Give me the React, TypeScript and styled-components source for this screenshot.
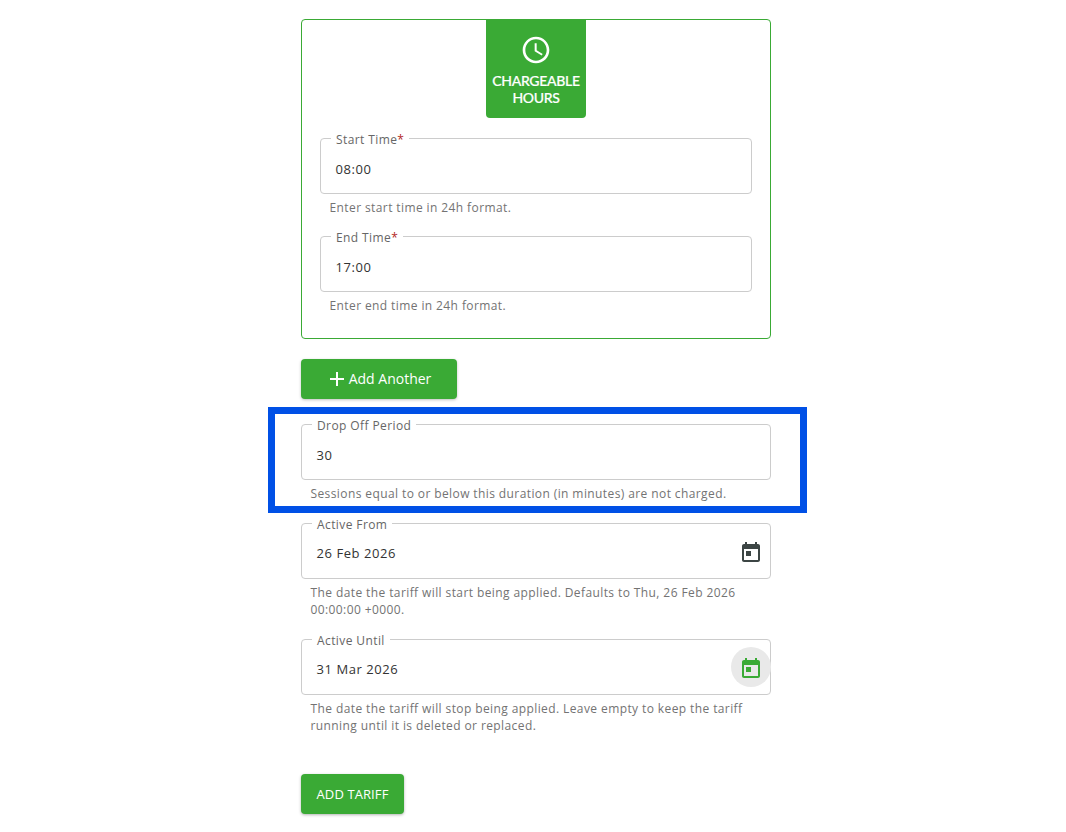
import React from "react";
import styled, { createGlobalStyle } from "styled-components";

const GREEN = "#3aaa35";

const Global = createGlobalStyle`
	html, body {
		margin: 0;
		padding: 0;
		background: #fff;
		font-family: "Open Sans", "Liberation Sans", sans-serif;
		overflow: hidden;
	}
`;

const Page = styled.div`
	position: relative;
	width: 1066px;
	height: 832px;
	box-sizing: border-box;
	padding: 19px 0 0 301px;
	overflow: hidden;
`;

const Column = styled.div`
	width: 470px;
	display: flex;
	flex-direction: column;
`;

const Card = styled.section`
	box-sizing: border-box;
	height: 320px;
	border: 1px solid ${GREEN};
	border-radius: 4px;
	padding: 0 18px;
	display: flex;
	flex-direction: column;
`;

const Badge = styled.div`
	align-self: center;
	box-sizing: border-box;
	width: 100px;
	height: 98px;
	padding-top: 14px;
	margin-bottom: 20px;
	background: ${GREEN};
	border-radius: 0 0 4px 4px;
	color: #fff;
	display: flex;
	flex-direction: column;
	align-items: center;
	gap: 6px;
`;

const BadgeText = styled.div`
	font-family: "Lato", "Open Sans", sans-serif;
	font-size: 14px;
	font-weight: 500;
	line-height: 17px;
	letter-spacing: -0.3px;
	text-align: center;
	text-transform: uppercase;
	-webkit-text-stroke: 0.2px #fff;
`;

const FieldWrap = styled.div<{ $gap: number }>`
	margin-bottom: ${(p) => p.$gap}px;
`;

const Outline = styled.div`
	position: relative;
	box-sizing: border-box;
	height: 56px;
	border: 1px solid #ccc;
	border-radius: 4px;
	padding-left: 14.5px;
	display: flex;
	align-items: center;
	justify-content: space-between;
`;

const Label = styled.label`
	position: absolute;
	top: -8px;
	left: 10px;
	padding: 0 5px;
	background: #fff;
	font-size: 12px;
	line-height: 17px;
	letter-spacing: 0.4px;
	color: #666;
`;

const Required = styled.span`
	color: #b3261e;
`;

const Value = styled.div<{ $adorned: boolean }>`
	margin-top: ${(p) => (p.$adorned ? 4.5 : 6)}px;
	font-size: 13px;
	line-height: 18px;
	letter-spacing: 0.55px;
	color: #333;
`;

const Helper = styled.div`
	margin-top: 5px;
	padding-left: 9.5px;
	font-size: 12px;
	line-height: 17px;
	letter-spacing: 0.4px;
	color: #737373;
`;

const CalendarButton = styled.div<{ $active?: boolean }>`
	width: 40px;
	height: 40px;
	margin-right: -1px;
	border-radius: 50%;
	display: flex;
	align-items: center;
	justify-content: center;
	background: ${(p) => (p.$active ? "#e9e9e9" : "transparent")};
	color: ${(p) => (p.$active ? GREEN : "#3c4544")};

	svg {
		margin-top: 4px;
	}
`;

const AddAnother = styled.button`
	box-sizing: border-box;
	width: 156px;
	height: 40px;
	margin: 20px 0 25px;
	border: 0;
	border-radius: 4px;
	background: ${GREEN};
	color: #fff;
	font-family: inherit;
	font-size: 14px;
	font-weight: 500;
	display: flex;
	align-items: center;
	justify-content: center;
	padding: 0 2px 2px 0;
	box-shadow: 0 1px 3px rgba(0, 0, 0, 0.25);

	svg {
		margin-top: 2px;
	}
`;

const Submit = styled.button`
	align-self: flex-start;
	box-sizing: border-box;
	width: 103px;
	height: 40px;
	margin-top: 20px;
	border: 0;
	border-radius: 4px;
	padding: 0;
	background: ${GREEN};
	color: #fff;
	font-family: inherit;
	font-size: 13px;
	font-weight: 500;
	letter-spacing: 0.1px;
	text-transform: uppercase;
	box-shadow: 0 1px 3px rgba(0, 0, 0, 0.3);
`;

const Highlight = styled.div`
	position: absolute;
	left: 268px;
	top: 407px;
	width: 539px;
	height: 106px;
	box-sizing: border-box;
	border: 7px solid #0050e6;
	pointer-events: none;
`;

const ClockIcon = () => (
	<svg width="32" height="32" viewBox="0 0 24 24" fill="currentColor">
		<path d="M11.99 2C6.47 2 2 6.48 2 12s4.47 10 9.99 10C17.52 22 22 17.52 22 12S17.52 2 11.99 2zM12 20c-4.42 0-8-3.58-8-8s3.58-8 8-8 8 3.58 8 8-3.58 8-8 8zm.5-13H11v6l5.25 3.15.75-1.23-4.5-2.67V7z" />
	</svg>
);

const PlusIcon = () => (
	<svg width="24" height="24" viewBox="0 0 24 24" fill="currentColor">
		<path d="M19 13h-6v6h-2v-6H5v-2h6V5h2v6h6v2z" />
	</svg>
);

const TodayIcon = () => (
	<svg width="24" height="24" viewBox="0 0 24 24" fill="currentColor">
		<path d="M19 3h-1V1h-2v2H8V1H6v2H5c-1.11 0-1.99.9-1.99 2L3 19c0 1.1.89 2 2 2h14c1.1 0 2-.9 2-2V5c0-1.1-.9-2-2-2zm0 16H5V8h14v11zM7 10h5v5H7z" />
	</svg>
);

type FieldProps = {
	label: string;
	value: string;
	helper: React.ReactNode;
	required?: boolean;
	calendar?: "idle" | "active";
	gap: number;
};

const Field = ({ label, value, helper, required, calendar, gap }: FieldProps) => (
	<FieldWrap $gap={gap}>
		<Outline>
			<Label>
				{label}
				{required && <Required>*</Required>}
			</Label>
			<Value $adorned={!!calendar}>{value}</Value>
			{calendar && (
				<CalendarButton $active={calendar == "active"}>
					<TodayIcon />
				</CalendarButton>
			)}
		</Outline>
		<Helper>{helper}</Helper>
	</FieldWrap>
);

export default function App() {
	return (
		<Page>
			<Global />
			<Column>
				<Card>
					<Badge>
						<ClockIcon />
						<BadgeText>
							Chargeable
							<br />
							Hours
						</BadgeText>
					</Badge>
					<Field
						label="Start Time"
						required
						value="08:00"
						helper="Enter start time in 24h format."
						gap={20}
					/>
					<Field
						label="End Time"
						required
						value="17:00"
						helper="Enter end time in 24h format."
						gap={0}
					/>
				</Card>
				<AddAnother>
					<PlusIcon />
					Add Another
				</AddAnother>
				<Field
					label="Drop Off Period"
					value="30"
					helper="Sessions equal to or below this duration (in minutes) are not charged."
					gap={21}
				/>
				<Field
					label="Active From"
					value="26 Feb 2026"
					calendar="idle"
					helper={
						<>
							The date the tariff will start being applied. Defaults to Thu, 26 Feb 2026
							<br />
							00:00:00 +0000.
						</>
					}
					gap={21}
				/>
				<Field
					label="Active Until"
					value="31 Mar 2026"
					calendar="active"
					helper={
						<>
							The date the tariff will stop being applied. Leave empty to keep the tariff
							<br />
							running until it is deleted or replaced.
						</>
					}
					gap={20}
				/>
				<Submit>Add Tariff</Submit>
			</Column>
			<Highlight />
		</Page>
	);
}
